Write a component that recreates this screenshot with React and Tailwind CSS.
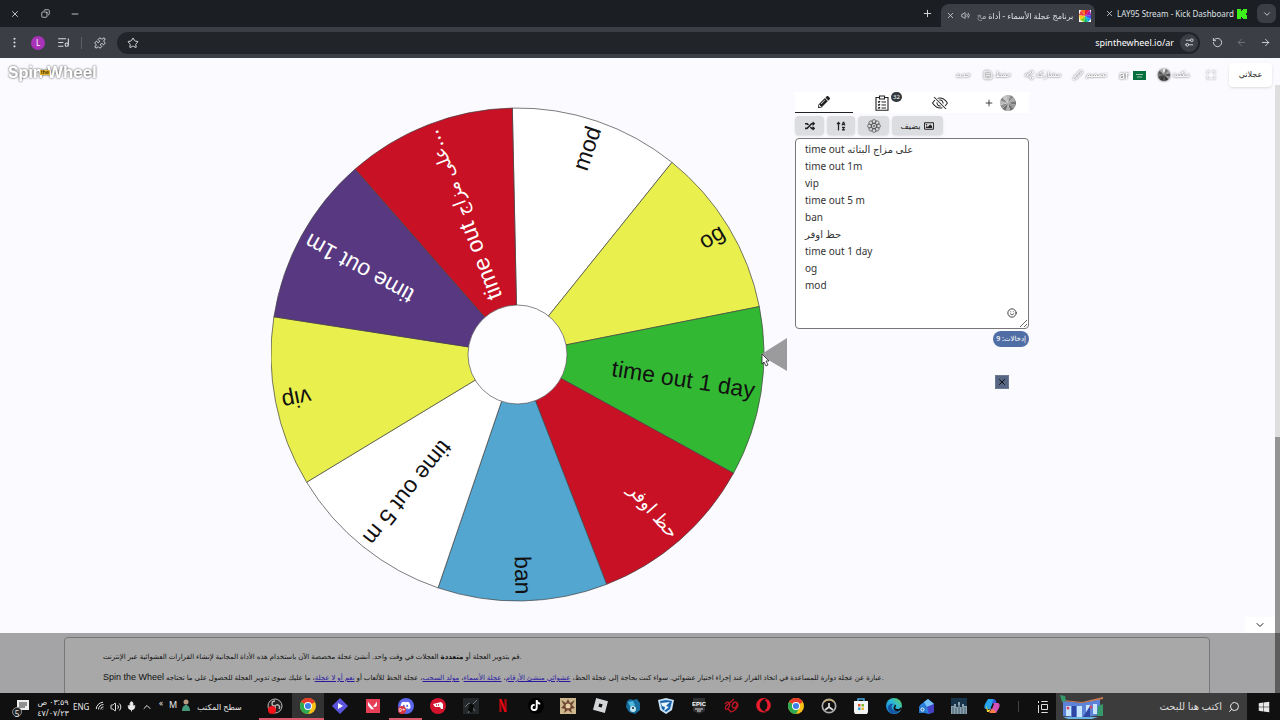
import React from "react";
import {
  X, Minus, Plus, Copy, MoreVertical, ListMusic, Puzzle, Star, RotateCcw, ArrowLeft, ArrowRight,
  ChevronDown, ChevronUp, Settings2, Maximize, Share2, Save, Search, Volume2, Wifi, Mic, Smile,
} from "lucide-react";
import { FaPencilAlt, FaRandom, FaDiscord, FaOpera, FaTiktok, FaWindows, FaRegImage, FaSortAlphaUp } from "react-icons/fa";
import { BsEyeSlash, BsPencil } from "react-icons/bs";
import { SiRoblox, SiValorant } from "react-icons/si";

const CX = 246.5;
const CY = 247.5;
const R = 246.5;
const HUB = 49.5;
const START = -91.2;

const slices = [
  { label: "mod", fill: "#ffffff", ink: "#111111" },
  { label: "og", fill: "#e9ef4d", ink: "#111111" },
  { label: "time out 1 day", fill: "#33b833", ink: "#111111" },
  { arabic: "حظ اوفر", fill: "#c81124", ink: "#ffffff" },
  { label: "ban", fill: "#53a6cf", ink: "#111111" },
  { label: "time out 5 m", fill: "#ffffff", ink: "#111111" },
  { label: "vip", fill: "#e9ef4d", ink: "#111111" },
  { label: "time out 1m", fill: "#573881", ink: "#ffffff" },
  { label: "time out ", arabic: "على مزاج", tail: "...", fill: "#c81124", ink: "#ffffff" },
];

const point = (deg, r) => {
  const a = (deg * Math.PI) / 180;
  return `${(CX + r * Math.cos(a)).toFixed(2)} ${(CY + r * Math.sin(a)).toFixed(2)}`;
};

function Wheel() {
  return (
    <svg className="h-[496px] w-[524px] shrink-0" viewBox="0 0 524 496" role="img" aria-label="عجلة الأسماء">
      {slices.map((s, i) => {
        const a = START + i * 40;
        return (
          <path
            key={i}
            d={`M${point(a, HUB)}L${point(a, R)}A${R} ${R} 0 0 1 ${point(a + 40, R)}L${point(a + 40, HUB)}Z`}
            fill={s.fill}
            stroke="#444"
            strokeWidth="0.7"
          />
        );
      })}
      <circle cx={CX} cy={CY} r={HUB} fill="#fdfdff" stroke="#555" strokeWidth="0.7" />
      {slices.map((s, i) => (
        <text
          key={i}
          x={CX + 240}
          y={CY + 7}
          textAnchor="end"
          direction="ltr"
          fill={s.ink}
          transform={`rotate(${START + 20 + i * 40} ${CX} ${CY})`}
          className="font-['Liberation_Sans','DejaVu_Sans',sans-serif] text-[23px]"
        >
          {s.label}
          {s.arabic && <tspan className="text-[18px]">{s.arabic}</tspan>}
          {s.tail}
        </text>
      ))}
      <path d="M489 248L516 231V264Z" fill="#9b9b9d" />
      <path d="M491 247v10l2-2 2 4 2-1-2-4h3z" fill="#fff" stroke="#222" strokeWidth="0.8" />
    </svg>
  );
}

function ChromeLogo() {
  return (
    <svg viewBox="0 0 24 24" className="size-4">
      <circle cx="12" cy="12" r="12" fill="#fbc116" />
      <path d="M12 12L1.6 6A12 12 0 0 1 22.4 6Z" fill="#e33b2e" />
      <path d="M12 12L1.6 6A12 12 0 0 0 12 24L17 15Z" fill="#2da94f" />
      <circle cx="12" cy="12" r="6" fill="#fff" />
      <circle cx="12" cy="12" r="4.6" fill="#3f7de8" />
    </svg>
  );
}

function GreyWheel({ className, tones }) {
  return (
    <svg viewBox="-12 -12 24 24" className={className}>
      {tones.map((t, i) => (
        <path key={i} d="M0 0L-3.1 -11.6A12 12 0 0 1 3.1 -11.6Z" fill={t} transform={`rotate(${i * 30})`} />
      ))}
    </svg>
  );
}

const panelTones = ["#b5b5b5", "#8a8a8a", "#a8a8a8", "#777", "#999", "#6d6d6d", "#b0b0b0", "#707070", "#8f8f8f", "#bdbdbd", "#8a8a8a", "#c6c6c6"];
const navTones = ["#ececec", "#777", "#a5a5a5", "#555", "#999", "#333", "#555", "#333", "#444", "#777", "#555", "#aaa"];

function WindowButton({ label, children }) {
  return <button aria-label={label} className="grid w-[30px] place-items-center">{children}</button>;
}

function BrowserTabs() {
  return (
    <div className="flex h-[27px] bg-[#1b1e22] font-['Noto_Sans','DejaVu_Sans',sans-serif] text-[8px] text-[#dfe1e5]">
      <WindowButton label="إغلاق"><X size={10} /></WindowButton>
      <WindowButton label="استعادة"><Copy size={9} className="rotate-90" /></WindowButton>
      <WindowButton label="تصغير"><Minus size={10} /></WindowButton>
      <div className="flex-1" />
      <button aria-label="علامة تبويب جديدة" className="mr-[6px] grid w-4 place-items-center"><Plus size={11} /></button>
      <div className="mt-1 flex w-[154px] items-center justify-between rounded-t-lg bg-[#3b3e45] pr-1 pl-[5px]">
        <button aria-label="إغلاق علامة التبويب"><X size={9} /></button>
        <Volume2 size={9} className="shrink-0" />
        <span dir="rtl" className="w-[98px] shrink-0 whitespace-nowrap [mask-image:linear-gradient(to_left,#000_85%,#0006)]">برنامج عجلة الأسماء - أداة مخ</span>
        <svg viewBox="0 0 12 12" className="size-3 shrink-0">
          <path d="M0 0h12v12H0z" fill="#fff" />
          <path d="M6 6L2 0h4z" fill="#f97316" /><path d="M6 6V0h5z" fill="#e11d48" />
          <path d="M6 6l5-6 1 5z" fill="#a21caf" /><path d="M6 6l6-1v4z" fill="#4f46e5" />
          <path d="M6 6l6 3-3 3z" fill="#0ea5e9" /><path d="M6 6l3 6H5z" fill="#10b981" />
          <path d="M6 6l-1 6-4-2z" fill="#84cc16" /><path d="M6 6l-5 4-1-5z" fill="#facc15" /><path d="M6 6L0 5l2-5z" fill="#ef4444" />
        </svg>
      </div>
      <div className="flex w-[162px] items-center justify-between pr-[10px] pl-[10px]">
        <button aria-label="إغلاق علامة التبويب"><X size={9} /></button>
        <span className="whitespace-nowrap">LAY95 Stream - Kick Dashboard</span>
        <svg viewBox="0 0 10 10" className="size-[10px]"><path d="M0 0h4v2h1V1h1V0h4v4H9v1H8h1v1h1v4H6V9H5V8H4v2H0z" fill="#3df01c" /></svg>
      </div>
      <button aria-label="بحث في علامات التبويب" className="my-1 mr-1 grid w-[19px] place-items-center rounded-md bg-[#3b3e45]"><ChevronDown size={10} /></button>
    </div>
  );
}

function AddressBar() {
  return (
    <div className="flex h-[31px] items-center bg-[#3b3e45] font-['Noto_Sans',sans-serif] text-[#d7d9dd]">
      <button aria-label="القائمة" className="ml-[7px] grid w-[14px] place-items-center"><MoreVertical size={13} /></button>
      <span className="ml-[10px] grid size-[14px] place-items-center rounded-full bg-[#a833b9] text-[8px] text-white">L</span>
      <ListMusic size={13} className="ml-3" />
      <span className="ml-[11px] h-3 w-px bg-[#5c6068]" />
      <Puzzle size={12} className="ml-3" />
      <div className="ml-[11px] flex h-[22px] flex-1 items-center rounded-full bg-[#212429] pr-[2px] pl-[10px]">
        <Star size={12} />
        <input aria-label="شريط العناوين" dir="ltr" defaultValue="spinthewheel.io/ar" className="min-w-0 flex-1 bg-transparent text-right text-[9px] text-white outline-none" />
        <span className="ml-[6px] grid size-[18px] place-items-center rounded-full bg-[#3b3e45]"><Settings2 size={11} className="-scale-x-100" /></span>
      </div>
      <button aria-label="إعادة تحميل" className="ml-3"><RotateCcw size={11} /></button>
      <button aria-label="التالي" className="ml-[13px] text-[#72757c]"><ArrowLeft size={11} /></button>
      <button aria-label="رجوع" className="mr-[9px] ml-[13px]"><ArrowRight size={11} /></button>
    </div>
  );
}

function NavItem({ label, children }) {
  return (
    <a href="#" className="flex items-center gap-[2px] text-white [filter:drop-shadow(0_0_1px_#444)]">
      {children}
      <span>{label}</span>
    </a>
  );
}

function SiteHeader() {
  return (
    <header className="flex h-[34px] items-start justify-between pr-[3px] pl-2 font-['DejaVu_Sans',sans-serif] text-[8px]">
      <a href="#" aria-label="Spin the Wheel" className="relative mt-1 font-['Inter',sans-serif] text-[16px] leading-5 font-bold text-white [filter:drop-shadow(0_0_1px_#444)]">
        Spin Wheel
        <span className="absolute top-2 left-8 bg-[#e2b12c] px-px text-[5px] leading-[5px] text-[#4d3a05]">the</span>
      </a>
      <div className="flex items-start gap-[13px] pt-[5px]">
        <nav className="flex h-6 items-center gap-3">
          <NavItem label="جديد" />
          <NavItem label="حفظ"><Save size={10} /></NavItem>
          <NavItem label="مشاركة"><Share2 size={10} /></NavItem>
          <NavItem label="تصميم"><BsPencil size={10} /></NavItem>
          <a href="#" className="flex items-center gap-1 text-[10px] text-white">
            <span className="[filter:drop-shadow(0_0_1px_#333)]">ar</span>
            <svg viewBox="0 0 13 9" className="h-[9px] w-[13px]"><path d="M0 0h13v9H0z" fill="#08703f" /><path d="M3 3.5h7M4 6h5" stroke="#d7eadf" strokeWidth=".7" /></svg>
          </a>
          <NavItem label="مكتبة"><GreyWheel className="size-3" tones={navTones} /></NavItem>
          <button aria-label="ملء الشاشة" className="ml-1 text-white [filter:drop-shadow(0_0_1px_#444)]"><Maximize size={10} /></button>
        </nav>
        <button className="h-6 w-[43px] rounded-sm bg-white text-[#222] shadow">عجلاتي</button>
      </div>
    </header>
  );
}

const entries = ["time out على مزاج البثاثه", "time out 1m", "vip", "time out 5 m", "ban", "حظ اوفر", "time out 1 day", "og", "mod"];

function ToolButton({ label, className, children }) {
  return (
    <button aria-label={label} className={`flex h-[19px] items-center justify-center gap-1 rounded-sm bg-[#dcdde1] text-[8px] text-[#222] shadow-sm ${className}`}>
      {children}
    </button>
  );
}

function EntriesPanel() {
  return (
    <aside className="w-[234px] shrink-0 font-['Noto_Sans','DejaVu_Sans',sans-serif] text-[#222]">
      <div className="flex h-[21px] bg-white">
        <button aria-label="تحرير" className="grid w-[58px] place-items-center border-b border-[#222]"><FaPencilAlt size={12} /></button>
        <button aria-label="النتائج" className="relative grid w-[58px] place-items-center">
          <svg viewBox="0 0 14 16" className="h-4 w-[14px]" fill="none" stroke="#222" strokeWidth="1.1">
            <path d="M4 2.5H1v12.800h12V2.500h-3M4.500 1h5v3h-5z" />
            <path d="M3 6.500l1 1 1-1.500M3 9.500l1 1 1-1.500M3 12.500l1 1 1-1.500M6.500 7H11M6.500 10H11M6.500 13H11" />
          </svg>
          <span className="absolute top-0 left-[38px] rounded-full bg-[#343a40] px-[2px] text-[6px] leading-[10px] text-white">32</span>
        </button>
        <button aria-label="إخفاء" className="grid w-[58px] place-items-center"><BsEyeSlash size={16} /></button>
        <button aria-label="إضافة عجلة" className="flex flex-1 items-center justify-center gap-[6px] pl-[2px]">
          <Plus size={10} /><GreyWheel className="size-4" tones={panelTones} />
        </button>
      </div>
      <div className="flex gap-[3px] py-[3px]">
        <ToolButton label="خلط" className="w-[29px]"><FaRandom size={10} /></ToolButton>
        <ToolButton label="ترتيب" className="w-[28px]"><FaSortAlphaUp size={10} /></ToolButton>
        <ToolButton label="الإعدادات" className="w-[31px]">
          <svg viewBox="-8 -8 16 16" className="size-[14px]" fill="none" stroke="#555" strokeWidth=".9">
            {[0, 45, 90, 135, 180, 225, 270, 315].map((a) => <circle key={a} cx="0" cy="-5" r="2.300" transform={`rotate(${a})`} />)}
            <circle r="3.200" /><circle r="1" />
          </svg>
        </ToolButton>
        <ToolButton label="يضيف صورة" className="w-[51px]"><span>يضيف</span><FaRegImage size={10} /></ToolButton>
      </div>
      <div className="relative">
        <textarea
          aria-label="الإدخالات"
          dir="ltr"
          defaultValue={entries.join("\n")}
          className="block h-[191px] w-full rounded border border-[#777] bg-white px-[9px] py-[2px] text-[10px] leading-[17px] text-[#333] outline-none"
        />
        <button aria-label="رموز تعبيرية" className="absolute right-3 bottom-[11px]"><Smile size={10} /></button>
      </div>
      <div className="flex flex-col items-end pt-[2px]">
        <span dir="rtl" className="rounded-full bg-[#4f6ea5] px-[3px] text-[7px] leading-4 font-medium text-white">إدخالات: 9</span>
        <button aria-label="إغلاق" className="mt-7 mr-5 grid size-[14px] place-items-center border border-[#6e7a94] bg-[#566581] text-black"><X size={10} /></button>
      </div>
    </aside>
  );
}

function InfoSection() {
  const link = "text-[#2a1aa0] underline";
  return (
    <section className="h-[60px] overflow-hidden bg-[#a4a4a7] pt-1 pr-[65px] pl-16 text-[#111]">
      <div dir="ltr" className="h-20 rounded-sm border border-[#777] bg-[#a8a8a8] px-[38px] pt-2 font-['Liberation_Sans','DejaVu_Sans',sans-serif] text-[7px] leading-[21px] whitespace-nowrap">
        <p>قم بتدوير العجلة أو <b>متعددة</b> العجلات في وقت واحد. أنشئ عجلة مخصصة الآن باستخدام هذه الأداة المجانية لإنشاء القرارات العشوائية عبر الإنترنت.</p>
        <p>
          <span className="text-[9px]">Spin the Wheel</span> عبارة عن عجلة دوارة للمساعدة في اتخاذ القرار عند إجراء اختيار عشوائي. سواء كنت بحاجة إلى عجلة الحظ، <a href="#" className={link}>عشوائي منشئ الأرقام</a>، <a href="#" className={link}>عجلة الأسماء</a>، <a href="#" className={link}>مولد السحب</a>، عجلة الحظ للألعاب أو <a href="#" className={link}>نعم أو لا عجلة</a>، ما عليك سوى تدوير العجلة للحصول على ما تحتاجه.
        </p>
      </div>
    </section>
  );
}

const apps = [
  { name: "OBS", active: true, icon: (
    <svg viewBox="0 0 16 16" className="size-4"><circle cx="8" cy="8" r="7" fill="#222" stroke="#bbb" /><path d="M8 8c-4 0-4-5 0-5M8 8c2-3 6 0 4 3M8 8c2 4-3 6-5 3" stroke="#bbb" strokeWidth="1.300" fill="none" /><circle cx="5" cy="12" r="4" fill="#f5121b" /></svg>
  ) },
  { name: "Chrome", active: true, lit: true, icon: <ChromeLogo /> },
  { name: "Clip", icon: <svg viewBox="0 0 16 16" className="size-4"><path d="M8 0l8 8-8 8-8-8z" fill="#5a55dc" /><path d="M6 5l5 3-5 3z" fill="#fff" /></svg> },
  { name: "Valorant", icon: <span className="grid size-[14px] place-items-center bg-[#e83f59] text-white"><SiValorant size={9} /></span> },
  { name: "Discord", active: true, icon: (
    <span className="relative grid size-4 place-items-center rounded-full bg-[#5b65ea] text-white"><FaDiscord size={11} /><span className="absolute bottom-0 left-0 rounded-full bg-[#d8343f] px-px text-[6px] leading-[8px]">9+</span></span>
  ) },
  { name: "Riot", icon: <svg viewBox="0 0 16 16" className="size-4"><circle cx="8" cy="8" r="8" fill="#d3122d" /><path d="M3 6l8-2 2 2v5h-2l-1-2H5z" fill="#fff" /><path d="M6.500 6v2M8.500 6v2" stroke="#d3122d" strokeWidth=".7" /></svg> },
  { name: "Game", icon: <svg viewBox="0 0 16 16" className="size-4"><path d="M0 0h16v16H0z" fill="#25282a" /><path d="M2 9l4-4 3 2 5-5M5 15l4-6 3 4" stroke="#74787b" fill="none" /><path d="M7 5l4 2-2 8-4-3z" fill="#080909" /></svg> },
  { name: "Netflix", icon: <svg viewBox="0 0 8 14" className="h-[13px] w-2"><path d="M0 0h2.500v14H0zM5.500 0H8v14H5.500z" fill="#a80811" /><path d="M0 0h2.500L8 14H5.500z" fill="#e50914" /></svg> },
  { name: "TikTok", icon: <span className="grid size-4 place-items-center rounded-full bg-black text-white"><FaTiktok size={11} /></span> },
  { name: "Brawl", icon: <svg viewBox="0 0 16 16" className="size-4"><path d="M0 0h16v16H0z" fill="#cdb78e" /><path d="M8 1l2 4 5-3-3 5 3 3-4 1 1 4-4-3-4 3 1-4-4-1 3-3-3-5 5 3z" fill="#6f4632" /><circle cx="8" cy="8" r="2.500" fill="#e6cfa7" /></svg> },
  { name: "Roblox", icon: <SiRoblox size={15} color="#d3d5d7" /> },
  { name: "Bear", icon: <svg viewBox="0 0 16 16" className="size-4"><path d="M2 3l3-2 3 1 4-1 3 4v7l-5 4-6-2-3-5z" fill="#176e9d" /><path d="M3 4l5-1 2 4-4 3z" fill="#4db8dc" /><circle cx="8" cy="11" r="3" fill="#c4e6f1" /><circle cx="8" cy="10" r="1" fill="#123" /></svg> },
  { name: "Rocket League", icon: <svg viewBox="0 0 16 16" className="size-4"><path d="M0 2l8-2 8 2-2 10-6 4-6-4z" fill="#c8e2f6" /><path d="M2 3l6-1 6 1-2 8-4 3-4-3z" fill="#1764ac" /><path d="M3 5l9-1-4 4 3 1-5 4 1-4-3-1z" fill="#eaf5fc" /></svg> },
  { name: "Epic Games", icon: <svg viewBox="0 0 14 16" className="h-4 w-[14px]"><path d="M1 0h12v13l-6 3-6-3z" fill="#303032" /><text x="7" y="8" textAnchor="middle" fontSize="6" fontWeight="bold" fill="#fff" fontFamily="Liberation Sans, sans-serif">EPIC</text><path d="M3 11h8M5 13h4" stroke="#ddd" /></svg> },
  { name: "Garena", icon: <svg viewBox="0 0 16 16" className="size-4" fill="none" stroke="#bb1723" strokeWidth="1.300"><path d="M2 6c3-4 6-1 4 3s-5 2-3-1l8-7M8 14c6-2 9-8 5-10-4 0-5 6-2 6s4-4 2-6M8 14L5 11" /></svg> },
  { name: "Opera", icon: <FaOpera size={15} color="#e91d2d" /> },
  { name: "Chrome 2", icon: <ChromeLogo /> },
  { name: "Overwatch", icon: <svg viewBox="0 0 16 16" className="size-4" fill="none"><circle cx="8" cy="8" r="6.700" stroke="#aaa" strokeWidth="1.700" /><path d="M3 4a6.700 6.700 0 0 1 10 0" stroke="#c5a96a" strokeWidth="1.700" /><path d="M8 5v4l-4 3M8 9l4 3" stroke="#ddd" strokeWidth="1.700" /></svg> },
  { name: "Store", icon: <svg viewBox="0 0 16 16" className="size-4"><path d="M5 4V1h6v3" stroke="#43a6df" strokeWidth="1.500" fill="none" /><path d="M1 3h14v11l-1 2H2l-1-2z" fill="#f1f3f5" /><path d="M5 6h2.500v2.500H5z" fill="#e5532d" /><path d="M8.500 6H11v2.500H8.500z" fill="#7eb62c" /><path d="M5 9.500h2.500V12H5z" fill="#279fda" /><path d="M8.500 9.500H11V12H8.500z" fill="#f0b323" /></svg> },
  { name: "Edge", icon: <svg viewBox="0 0 16 16" className="size-4"><defs><linearGradient id="edge" x1="0" y1="1" x2="1" y2="0"><stop offset="0" stopColor="#1470c9" /><stop offset=".55" stopColor="#2bb8dd" /><stop offset="1" stopColor="#65d04c" /></linearGradient></defs><circle cx="8" cy="8" r="8" fill="url(#edge)" /><path d="M8 6c-4 1-3 7 3 7l3-1c-2 4-8 5-11 1C0 8 4 5 8 6z" fill="#1556a6" /><path d="M8 7c3-1 2 2 1 3 2 2 5 1 6-1l1 2-3 2c-5 1-7-3-4-6z" fill="#101010" /></svg> },
  { name: "Mail", icon: <svg viewBox="0 0 16 16" className="size-4"><path d="M1 7l8-6 6 5v8l-5 2-9-2z" fill="#2c7fe0" /><path d="M5 4l4-3 6 5-7 3z" fill="#75c0f6" /><path d="M8 9l7-3v8l-5 2z" fill="#4640c4" /><path d="M0 8h7v7H0z" fill="#2377cb" /><circle cx="3.500" cy="11.500" r="1.600" stroke="#fff" fill="none" /></svg> },
  { name: "City", icon: <svg viewBox="0 0 16 16" className="size-4"><path d="M0 0h16v16H0z" fill="#16334a" /><path d="M0 8h3V6h2v3h2V4h2v5h2V6h2v2h3v8H0z" fill="#8ba1ae" /><path d="M2 9v7M5 10v6M8 7v9M11 9v7M14 9v7" stroke="#435b6b" /></svg> },
  { name: "Copilot", icon: <svg viewBox="0 0 16 16" className="size-4"><path d="M4 1h6L7 11H3C0 11 0 9 1 6z" fill="#25a5ed" /><path d="M9 1c4 0 3 4 4 5l-3-1-2 4z" fill="#3259db" /><path d="M2 7l2 5 3-1-2 3H3z" fill="#f0d33c" /><path d="M9 5h4c3 0 3 2 2 5l-3 5H6z" fill="#d352b8" /><path d="M5 14l4-3 3 3-1 1H6z" fill="#f57b42" /><path d="M6.500 10L9 5l1 1-2 5z" fill="#111" /></svg> },
];

function Taskbar() {
  return (
    <footer className="flex h-[27px] items-stretch bg-[#101010] font-['Noto_Sans','DejaVu_Sans',sans-serif] text-[8px] text-[#e8e8e8]">
      <div className="flex w-[259px] shrink-0 items-center pl-[13px]">
        <button aria-label="الإشعارات" className="relative mr-2 h-4 w-4">
          <svg viewBox="0 0 16 16" className="size-4"><path d="M4 1h12v10H9l-3 3v-3H4z" fill="#eee" /><path d="M6 4h8M6 6h8M6 8h6" stroke="#333" /></svg>
          <span className="absolute -bottom-[2px] -left-[1px] grid size-[10px] place-items-center rounded-full border border-[#888] bg-[#222]">5</span>
        </button>
        <div dir="rtl" className="w-8 text-center leading-[11px] whitespace-nowrap"><div>٠٣:٥٩ ص</div><div dir="ltr">٤٧/٠٧/٢٣</div></div>
        <span className="ml-1 w-[22px]">ENG</span>
        <Wifi size={11} className="-rotate-45" />
        <Volume2 size={12} className="ml-1" />
        <Mic size={11} fill="#eee" className="ml-1" />
        <ChevronUp size={12} className="ml-1" />
        <span className="mb-2 ml-[6px]">«</span>
        <span className="mb-1 ml-[6px] text-[9px]">M</span>
        <svg viewBox="0 0 10 12" className="mb-1 ml-1 h-3 w-[10px]"><circle cx="5" cy="3" r="2.500" fill="#b99b80" /><path d="M1 12c0-8 8-8 8 0z" fill="#459a7c" /></svg>
        <span className="ml-[6px] whitespace-nowrap">سطح المكتب</span>
      </div>
      <div className="grid flex-1 grid-cols-[repeat(23,minmax(0,1fr))]">
        {apps.map((a) => (
          <button key={a.name} aria-label={a.name} className={`grid place-items-center border-b-2 ${a.active ? "border-[#d85a6c]" : "border-transparent"} ${a.lit ? "bg-[#333]" : ""}`}>
            {a.icon}
          </button>
        ))}
      </div>
      <span className="mx-[10px] my-2 w-px bg-[#444]" />
      <button aria-label="عرض المهام" className="grid w-[27px] place-items-center">
        <svg viewBox="0 0 12 12" className="size-3" fill="none" stroke="#ddd"><path d="M4.500 3.500h6v5h-6zM4.500 1V.5h6V1M4.500 11v.5h6V11M1.500 0v2M1.500 4v8" /></svg>
      </button>
      <label className="flex w-[191px] items-center bg-[#3c3c3c] pr-[7px] pl-1">
        <svg viewBox="0 0 44 25" className="h-[25px] w-11 shrink-0">
          <path d="M3 7l19 2 18-4v16l-18 3-19-2z" fill="#5d83d9" /><path d="M3 6l19 2L43 3v2l-21 4L3 7z" fill="#d07a50" />
          <path d="M6 12h5v10H6zM17 12h5v11h-5zM26 11h4v10h-4zM33 10h4v10h-4z" fill="#c9e5fb" />
          <path d="M12 23V12h4v11zM23 23l7-11v11z" fill="#3046a4" /><circle cx="8" cy="14" r="1.500" fill="#d84764" /><circle cx="31" cy="13" r="1.500" fill="#d84764" />
          <path d="M0 1l5 1 1 5-4 1zM38 12l5-2v12h-6z" fill="#35986b" /><path d="M3 23h35l-6 2H8z" fill="#67b4dd" />
        </svg>
        <input aria-label="بحث" dir="rtl" placeholder="اكتب هنا للبحث" className="min-w-0 flex-1 bg-transparent pr-[6px] text-[10px] outline-none placeholder:text-[#ddd]" />
        <Search size={12} className="-scale-x-100" />
      </label>
      <button aria-label="ابدأ" className="grid w-[33px] place-items-center"><FaWindows size={12} /></button>
    </footer>
  );
}

export default function App() {
  return (
    <div dir="ltr" className="flex h-screen flex-col overflow-hidden bg-[#fafaff]">
      <BrowserTabs />
      <AddressBar />
      <div className="flex min-h-0 flex-1">
        <div className="flex min-w-0 flex-1 flex-col">
          <SiteHeader />
          <main className="relative flex min-h-0 flex-1 items-start justify-center pl-[25px]">
            <div className="pt-[15px]"><Wheel /></div>
            <EntriesPanel />
            <button aria-label="إظهار المزيد" className="absolute right-0 bottom-0 grid h-4 w-[30px] place-items-center bg-white text-[#222]"><ChevronDown size={12} /></button>
          </main>
          <InfoSection />
        </div>
        <div className="flex w-[5px] flex-col bg-[#dededf]">
          <div className="h-[27px] bg-[#fafaff]" />
          <div className="flex-[352]" />
          <div className="flex-[196] bg-[#949494]" />
          <div className="h-[60px] bg-[#5c5c5c]" />
        </div>
      </div>
      <Taskbar />
    </div>
  );
}
